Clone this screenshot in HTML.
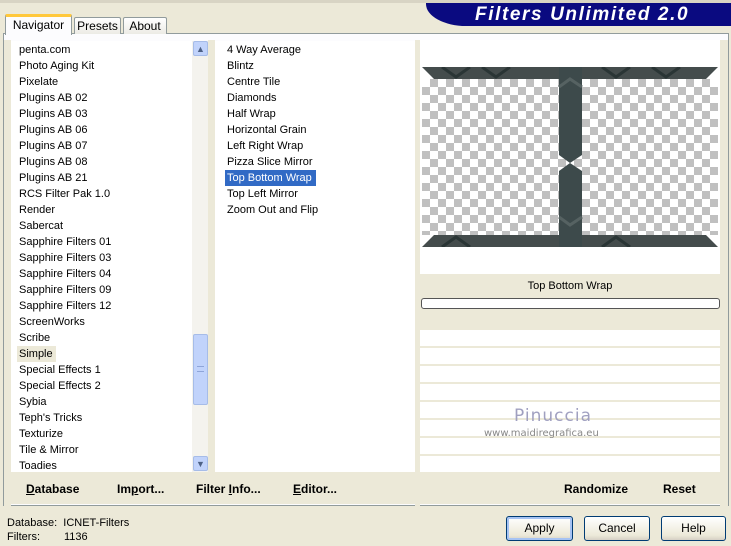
<!DOCTYPE html>
<html><head><meta charset="utf-8"><style>
*{margin:0;padding:0;box-sizing:border-box}
body{width:731px;height:546px;background:#ece9d8;font-family:"Liberation Sans",sans-serif;font-size:11px;color:#000;position:relative;overflow:hidden}
.a{position:absolute}
.li{position:absolute;left:0;height:16px;line-height:16px;padding-left:8px;white-space:nowrap}
.tab{position:absolute;top:17px;height:17px;border:1px solid #919b9c;border-bottom:none;background:linear-gradient(#fff,#ecebe5);font-size:12px;text-align:center;line-height:16px;border-radius:2px 2px 0 0}
.btn{position:absolute;top:516px;height:25px;border:1px solid #003c74;border-radius:3px;background:linear-gradient(#fff,#ece9d8 80%,#d6d0c5);text-align:center;line-height:23px;font-size:12px}
.bb{position:absolute;top:482px;font-weight:bold;font-size:12px}
</style></head><body>
<div class="a" style="left:0;top:0;width:731px;height:3px;background:#d8d4c4"></div>
<div class="a" style="left:426px;top:3px;width:305px;height:23px;background:#0a0a80;border-radius:0 0 0 40px/0 0 0 22px"></div>
<div class="a" style="left:475px;top:4px;font-size:19px;font-weight:bold;font-style:italic;color:#fff;letter-spacing:1.6px">Filters Unlimited 2.0</div>
<div class="a" style="left:3px;top:33px;width:726px;height:473px;border:1px solid #919b9c;background:#fcfcfe"></div>
<div class="tab" style="left:5px;top:14px;width:67px;height:21px;background:#fcfcfe;border-top:3px solid #ffc83c;border-bottom:none;line-height:16px">Navigator</div>
<div class="tab" style="left:74px;width:47px">Presets</div>
<div class="tab" style="left:123px;width:44px">About</div>
<div class="a" style="left:208px;top:40px;width:7px;height:432px;background:#ece9d8"></div>
<div class="a" style="left:415px;top:40px;width:5px;height:466px;background:#ece9d8"></div>
<div class="a" style="left:720px;top:40px;width:8px;height:466px;background:#ece9d8"></div>
<div class="a" style="left:4px;top:40px;width:7px;height:466px;background:#ece9d8"></div>
<div class="a" style="left:11px;top:41px;width:182px;height:431px;background:#fff">
<div class="li" style="top:1px">penta.com</div>
<div class="li" style="top:17px">Photo Aging Kit</div>
<div class="li" style="top:33px">Pixelate</div>
<div class="li" style="top:49px">Plugins AB 02</div>
<div class="li" style="top:65px">Plugins AB 03</div>
<div class="li" style="top:81px">Plugins AB 06</div>
<div class="li" style="top:97px">Plugins AB 07</div>
<div class="li" style="top:113px">Plugins AB 08</div>
<div class="li" style="top:129px">Plugins AB 21</div>
<div class="li" style="top:145px">RCS Filter Pak 1.0</div>
<div class="li" style="top:161px">Render</div>
<div class="li" style="top:177px">Sabercat</div>
<div class="li" style="top:193px">Sapphire Filters 01</div>
<div class="li" style="top:209px">Sapphire Filters 03</div>
<div class="li" style="top:225px">Sapphire Filters 04</div>
<div class="li" style="top:241px">Sapphire Filters 09</div>
<div class="li" style="top:257px">Sapphire Filters 12</div>
<div class="li" style="top:273px">ScreenWorks</div>
<div class="li" style="top:289px">Scribe</div>
<div class="li" style="top:305px;left:6px;padding-left:2px;width:39px;background:#ece9d8">Simple</div>
<div class="li" style="top:321px">Special Effects 1</div>
<div class="li" style="top:337px">Special Effects 2</div>
<div class="li" style="top:353px">Sybia</div>
<div class="li" style="top:369px">Teph's Tricks</div>
<div class="li" style="top:385px">Texturize</div>
<div class="li" style="top:401px">Tile &amp; Mirror</div>
<div class="li" style="top:417px">Toadies</div>
</div>
<div class="a" style="left:192px;top:41px;width:16px;height:431px;background:#f4f3ee"></div>
<div class="a" style="left:193px;top:41px;width:15px;height:15px;background:#c1d3fb;border:1px solid #a6bce8;border-radius:2px;color:#4d6185;font-size:9px;text-align:center;line-height:14px">&#9650;</div>
<div class="a" style="left:193px;top:334px;width:15px;height:71px;background:#c1d3fb;border:1px solid #a6bce8;border-radius:2px"></div>
<div class="a" style="left:197px;top:366px;width:7px;height:6px;border-top:1px solid #8ea5d8;border-bottom:1px solid #8ea5d8"></div>
<div class="a" style="left:193px;top:456px;width:15px;height:15px;background:#c1d3fb;border:1px solid #a6bce8;border-radius:2px;color:#4d6185;font-size:9px;text-align:center;line-height:14px">&#9660;</div>
<div class="a" style="left:215px;top:41px;width:200px;height:431px;background:#fff">
<div class="li" style="top:1px;padding-left:12px">4 Way Average</div>
<div class="li" style="top:17px;padding-left:12px">Blintz</div>
<div class="li" style="top:33px;padding-left:12px">Centre Tile</div>
<div class="li" style="top:49px;padding-left:12px">Diamonds</div>
<div class="li" style="top:65px;padding-left:12px">Half Wrap</div>
<div class="li" style="top:81px;padding-left:12px">Horizontal Grain</div>
<div class="li" style="top:97px;padding-left:12px">Left Right Wrap</div>
<div class="li" style="top:113px;padding-left:12px">Pizza Slice Mirror</div>
<div class="li" style="top:129px;left:10px;padding-left:2px;width:91px;background:#316ac5;color:#fff">Top Bottom Wrap</div>
<div class="li" style="top:145px;padding-left:12px">Top Left Mirror</div>
<div class="li" style="top:161px;padding-left:12px">Zoom Out and Flip</div>
</div>
<div class="a" style="left:420px;top:40px;width:300px;height:234px;background:#fff"></div>
<div class="a" style="left:422px;top:79px;width:296px;height:156px;background-color:#fff;background-image:linear-gradient(45deg,#c0c0c0 25%,transparent 25%,transparent 75%,#c0c0c0 75%),linear-gradient(45deg,#c0c0c0 25%,transparent 25%,transparent 75%,#c0c0c0 75%);background-size:16px 16px;background-position:0 0,8px 8px"></div>
<svg class="a" style="left:422px;top:67px" width="296" height="180">
<polygon points="0,0 296,0 284,12 12,12" fill="#444c4c"/>
<polygon points="0,180 296,180 284,168 12,168" fill="#444c4c"/>
<polygon points="137,0 160,0 160,88 148,96 137,88" fill="#3d4a4b"/>
<polygon points="137,180 160,180 160,104 148,96 137,104" fill="#3d4a4b"/>
<path d="M20,0 l14,10 14,-10 M60,0 l14,10 14,-10 M180,0 l14,10 14,-10 M230,0 l14,10 14,-10 M20,180 l14,-10 14,10 M180,180 l14,-10 14,10" stroke="#2a3535" stroke-width="3" fill="none"/>
<path d="M137,20 l11,-8 12,8 M137,150 l11,8 12,-8" stroke="#566262" stroke-width="3" fill="none"/>
</svg>
<div class="a" style="left:420px;top:274px;width:300px;height:56px;background:#ece9d8"></div>
<div class="a" style="left:420px;top:280px;width:300px;text-align:center">Top Bottom Wrap</div>
<div class="a" style="left:421px;top:298px;width:299px;height:11px;background:#fff;border:1px solid #555;border-radius:3px"></div>
<div class="a" style="left:420px;top:330px;width:300px;height:142px;background:repeating-linear-gradient(#fff 0,#fff 16px,#ece9d8 16px,#ece9d8 18px)"></div>
<div class="a" style="left:514px;top:406px;font-size:17px;color:#a0a0c0;font-family:'DejaVu Sans',sans-serif;letter-spacing:1px">Pinuccia</div>
<div class="a" style="left:484px;top:428px;font-size:10px;color:#888;font-family:'DejaVu Sans',sans-serif">www.maidiregrafica.eu</div>
<div class="a" style="left:11px;top:472px;width:404px;height:32px;background:#ece9d8"></div>
<div class="a" style="left:420px;top:472px;width:300px;height:32px;background:#ece9d8"></div>
<div class="bb" style="left:26px"><u>D</u>atabase</div>
<div class="bb" style="left:117px">Im<u>p</u>ort...</div>
<div class="bb" style="left:196px">Filter <u>I</u>nfo...</div>
<div class="bb" style="left:293px"><u>E</u>ditor...</div>
<div class="bb" style="left:564px">Randomize</div>
<div class="bb" style="left:663px">Reset</div>
<div class="a" style="left:7px;top:516px;line-height:14px">Database:&nbsp; ICNET-Filters<br>Filters:<span style="position:absolute;left:57px">1136</span></div>
<div class="btn" style="left:506px;width:67px;box-shadow:inset 0 0 0 2px #a6c3f3">Apply</div>
<div class="btn" style="left:584px;width:66px">Cancel</div>
<div class="btn" style="left:661px;width:65px">Help</div>
</body></html>
